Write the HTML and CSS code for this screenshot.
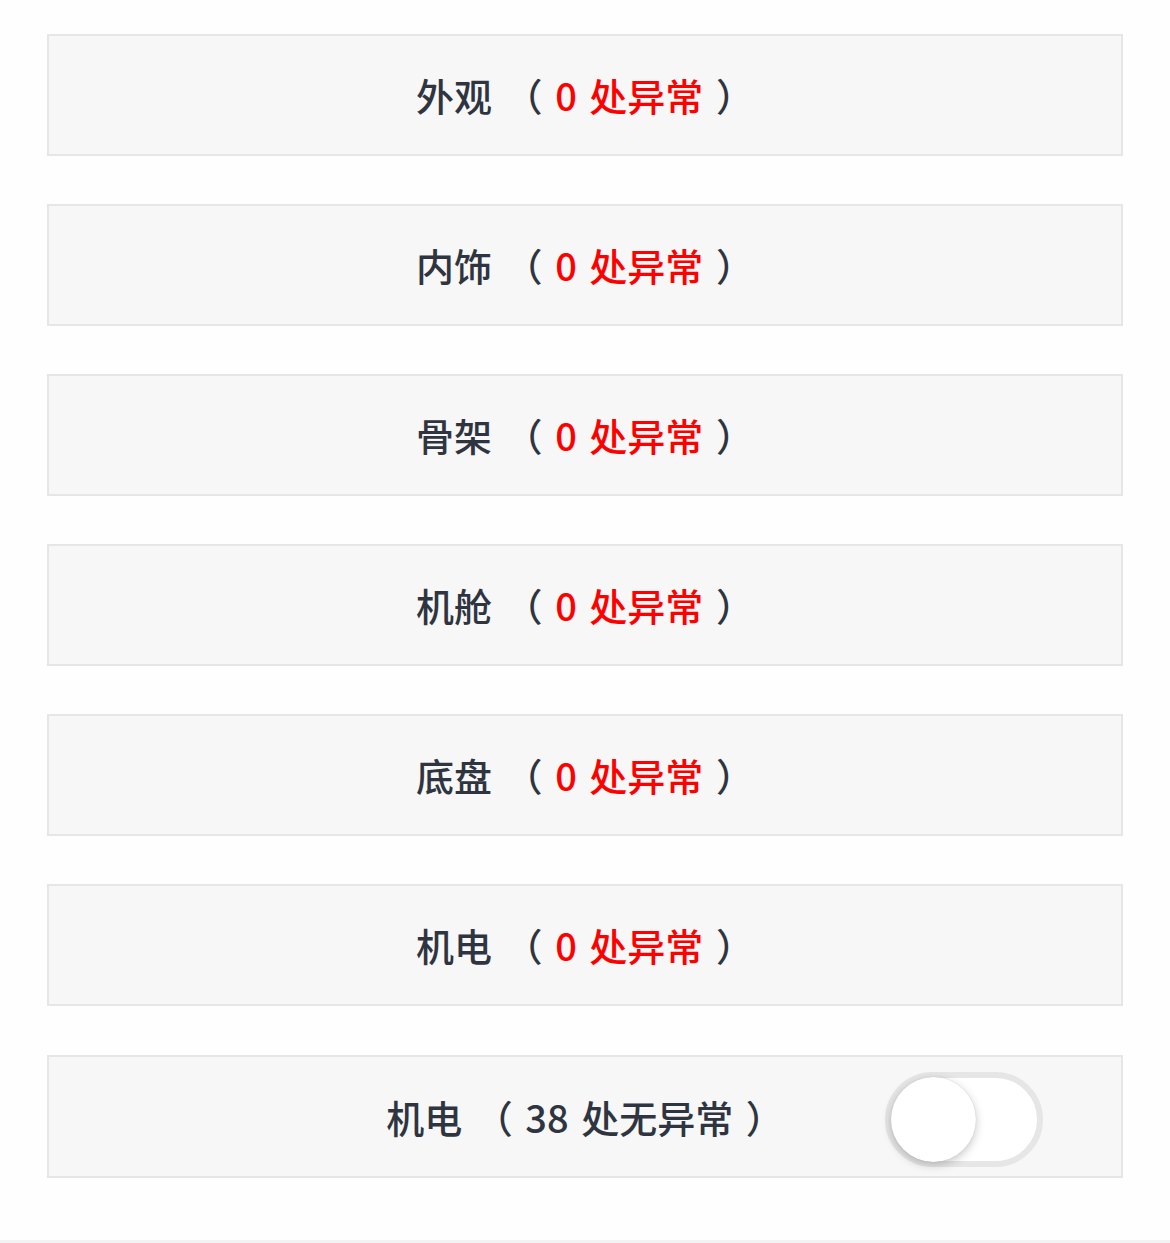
FILE: index.html
```html
<!DOCTYPE html>
<html>
    <head>
        <title>检测结果</title>
        <link rel="stylesheet" href="styles.css">
    </head>
    <body>
        <div class="check_list">
            <div class="check_row"><span class="label">外观 （ <span class="warn">0 处异常</span> ）</span></div>
            <div class="check_row"><span class="label">内饰 （ <span class="warn">0 处异常</span> ）</span></div>
            <div class="check_row"><span class="label">骨架 （ <span class="warn">0 处异常</span> ）</span></div>
            <div class="check_row"><span class="label">机舱 （ <span class="warn">0 处异常</span> ）</span></div>
            <div class="check_row"><span class="label">底盘 （ <span class="warn">0 处异常</span> ）</span></div>
            <div class="check_row"><span class="label">机电 （ <span class="warn">0 处异常</span> ）</span></div>
            <div class="check_row last"><span class="label">机电 （ 38 处无异常 ）</span><span class="switch"><span class="knob"></span></span></div>
        </div>
        <div class="bottom_bar"></div>
    </body>
</html>
```

FILE: styles.css
```css
html, body {
	margin: 0;
	padding: 0;
	background: #fefefe;
}
body {
	font-family: "Noto Sans CJK SC", "Noto Sans", sans-serif;
	color: #2f3540;
}
.check_list {
	padding: 34px 47px 0 47px;
	display: flex;
	flex-direction: column;
	gap: 48px;
}
.check_row {
	position: relative;
	height: 118px;
	border: 2px solid #e6e6e6;
	background: #f7f7f7;
	display: flex;
	align-items: center;
	justify-content: center;
}
.check_row.last {
	margin-top: 1px;
	height: 119px;
}
.label {
	font-size: 38px;
	font-weight: 500;
	word-spacing: 4px;
	white-space: pre;
	line-height: 1;
}
.warn {
	color: #ff0000;
}
.switch {
	position: absolute;
	right: 78px;
	top: 15px;
	width: 146px;
	height: 83px;
	border: 6px solid #e6e6e6;
	border-radius: 48px;
	background: #fff;
}
.knob {
	position: absolute;
	left: 0;
	top: 0;
	width: 85px;
	height: 85px;
	margin: -1px 0 0 0;
	border-radius: 50%;
	background: #fff;
	box-shadow: 0 3px 10px rgba(0, 0, 0, 0.22), 0 0 1px rgba(0, 0, 0, 0.2);
}
.bottom_bar {
	margin-top: 62px;
	height: 3px;
	background: #f3f3f3;
}
```
